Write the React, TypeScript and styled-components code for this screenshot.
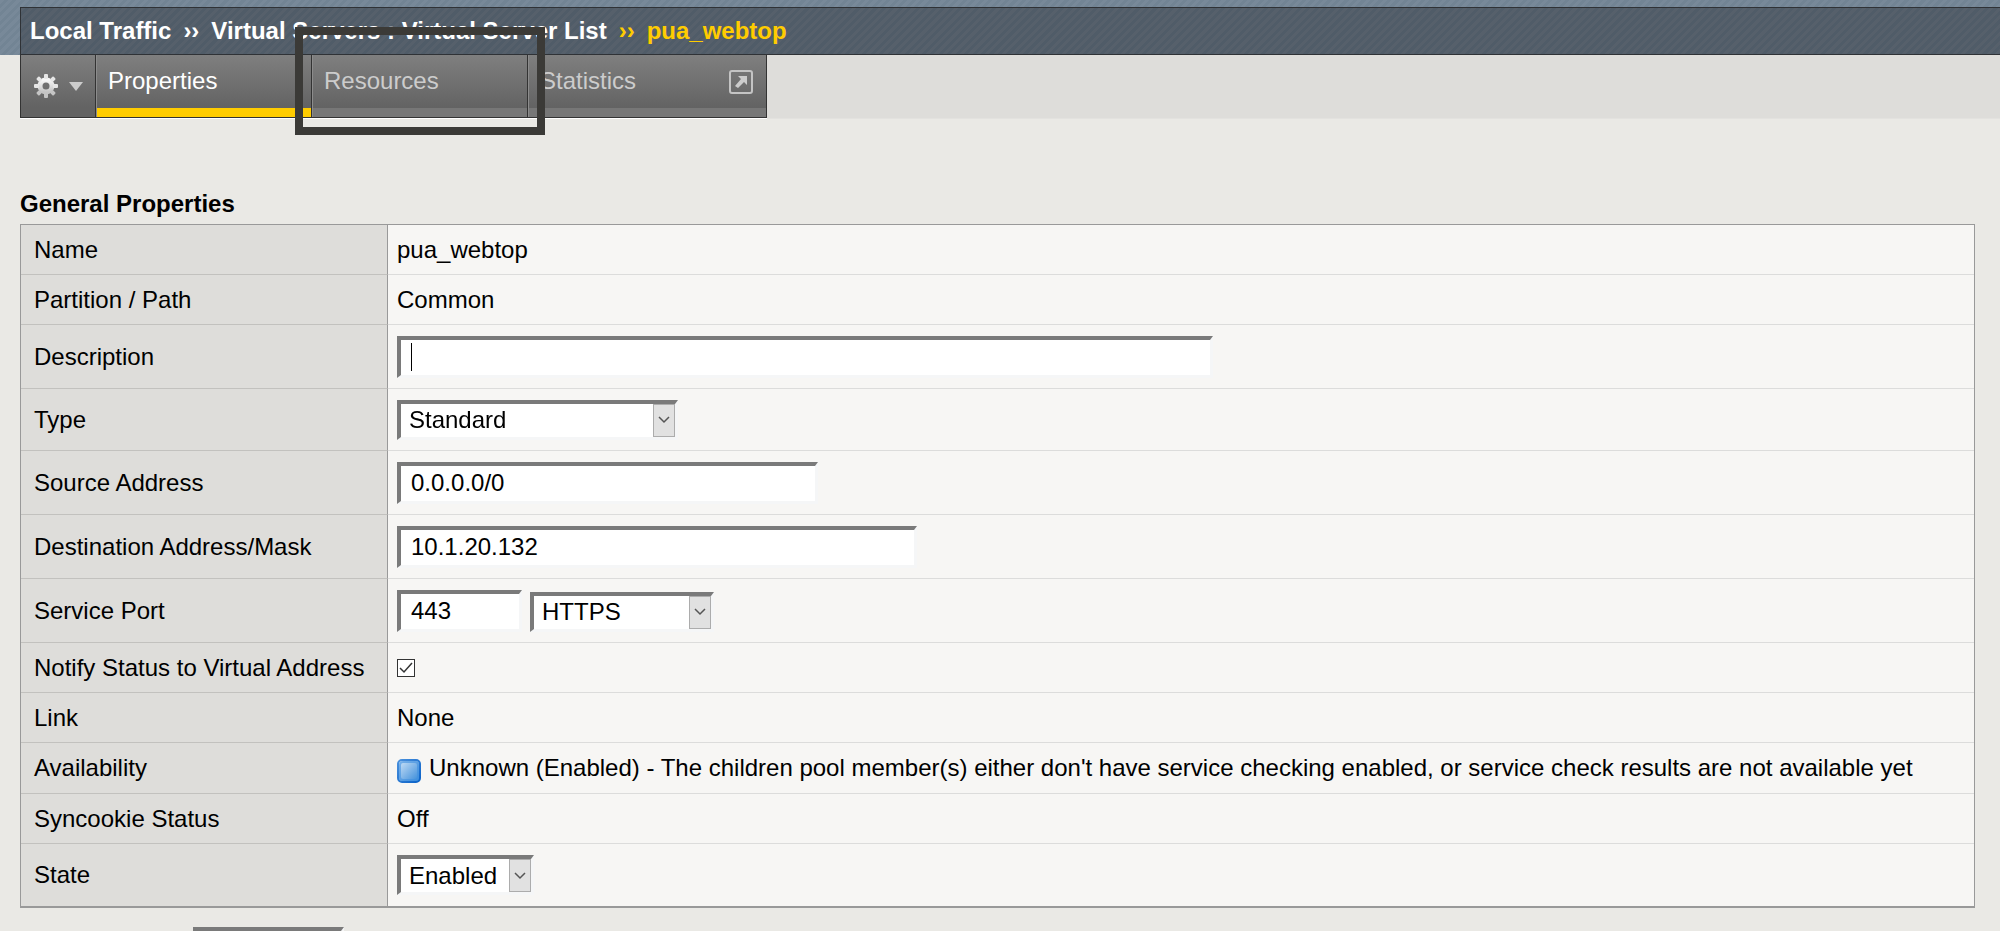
import React from 'react';
import styled, { createGlobalStyle, css } from 'styled-components';

const GlobalStyle = createGlobalStyle`
  *, *::before, *::after { box-sizing: border-box; }
  html { scrollbar-width: none; }
  body {
    margin: 0;
    background: #eae9e5;
    color: #000;
    font: 24px/28px "Liberation Sans", Arial, sans-serif;
  }
  input, select, button { font: inherit; color: inherit; margin: 0; border-radius: 0; }
`;

const Banner = styled.header`
  padding: 7px 0 0 20px;
  background: repeating-linear-gradient(135deg, #788999 0 3px, #728494 3px 6px);
`;

const Breadcrumb = styled.nav`
  display: flex;
  align-items: center;
  gap: 12px;
  height: 48px;
  padding-left: 9px;
  border: 1px solid #2f3236;
  border-right: 0;
  background: repeating-linear-gradient(135deg, #56606b 0 3px, #505c68 3px 6px);
  color: #fff;
  font-weight: bold;
  white-space: nowrap;
`;

const Crumb = styled.a`
  color: inherit;
  text-decoration: none;
`;

const Current = styled.span`
  color: #fc0;
`;

const TabStrip = styled.div`
  display: flex;
  height: 64px;
  margin-left: 20px;
  background: #dedddA;
  border-bottom: 1px solid #e3e2df;
`;

const Tabs = styled.nav`
  display: flex;
  border-left: 1px solid #333;
  border-bottom: 1px solid #333;
  box-shadow: 0 1px 0 #fff;
`;

const tabFace = css`
  border: 0;
  border-right: 1px solid #333;
  background: linear-gradient(#7f7f7f, #636363 85%);
`;

const GearButton = styled.button`
  ${tabFace}
  display: flex;
  align-items: center;
  gap: 10px;
  width: 75px;
  padding: 0 0 0 12px;
`;

const Tab = styled.a<{ $active?: boolean; $width: number }>`
  ${tabFace}
  position: relative;
  display: flex;
  justify-content: space-between;
  width: ${p => p.$width}px;
  padding: 12px 13px 0 11px;
  border-left: 1px solid #8c8c8c;
  color: ${p => (p.$active ? '#fff' : '#ccc')};
  text-decoration: none;

  &::after {
    content: '';
    position: absolute;
    inset: auto 0 0 0;
    height: 9px;
    background: ${p => (p.$active ? '#fc0' : '#777')};
  }
`;

const TabIcon = styled.svg`
  margin-top: 3px;
`;

const Highlight = styled.span`
  position: absolute;
  z-index: 2;
  inset: -28px -18px -18px -18px;
  border: 8px solid #3b3a37;
  pointer-events: none;
`;

const Main = styled.main`
  padding: 71px 25px 0 20px;
`;

const Heading = styled.h1`
  margin: 0 0 6px;
  font-size: 24px;
  line-height: 28px;
`;

const Properties = styled.table`
  width: 100%;
  border: 1px solid #999;
  border-bottom-width: 2px;
  border-spacing: 0;
`;

const Row = styled.tr<{ $height: number }>`
  height: ${p => p.$height}px;

  &:last-child > * { border-bottom: 0; }
`;

const Label = styled.th`
  width: 367px;
  padding: 0 0 0 13px;
  border-right: 1px solid #999;
  border-bottom: 1px solid #c2c1be;
  background: #dedddA;
  font-weight: normal;
  text-align: left;
`;

const Value = styled.td`
  padding: 0 0 0 9px;
  border-bottom: 1px solid #dcdcdb;
  background: #f7f6f4;
`;

const Fields = styled.div`
  display: flex;
  align-items: flex-end;
  gap: 8px;
`;

const sunken = css`
  border-style: solid;
  border-width: 4px 3px 3px 4px;
  border-color: #7a7a7a #f5f6f7 #f5f6f7 #7a7a7a;
  background-color: #fff;
  outline: none;
`;

const TextBox = styled.input<{ $width: number }>`
  ${sunken}
  display: block;
  width: ${p => p.$width}px;
  height: 42px;
  padding: 0 10px;
`;

const CaretFrame = styled.div`
  position: relative;

  input { caret-color: transparent; }

  &:focus-within input:placeholder-shown + span { display: block; }
`;

const Caret = styled.span`
  position: absolute;
  top: 7px;
  left: 14px;
  display: none;
  width: 1px;
  height: 28px;
  background: #000;
  pointer-events: none;
`;

const SelectFrame = styled.div<{ $width: number }>`
  position: relative;
  width: ${p => p.$width}px;
`;

const SelectBox = styled.select`
  ${sunken}
  display: block;
  appearance: none;
  width: 100%;
  height: 40px;
  padding: 0 24px 0 8px;
`;

const SelectArrow = styled.span`
  position: absolute;
  inset: 4px 3px 3px auto;
  display: grid;
  place-items: center;
  width: 22px;
  border: 1px solid #acacac;
  background: #e1e1e1;
  pointer-events: none;
`;

const CheckFrame = styled.div`
  position: relative;
  width: 18px;
  height: 18px;
`;

const CheckBox = styled.input`
  display: block;
  appearance: none;
  width: 18px;
  height: 18px;
  border: 1px solid #333;
  background: #fff;
`;

const CheckMark = styled.svg`
  position: absolute;
  inset: 0;
  pointer-events: none;
`;

const Status = styled.div`
  display: flex;
  align-items: center;
  gap: 8px;
`;

const StatusIcon = styled.svg`
  flex: none;
  margin-top: 5px;
`;

const ConfigBar = styled.div`
  padding: 19px 0 0 173px;
`;

function Select({ id, label, value, width }: { id: string; label?: string; value?: string; width: number }) {
  return (
    <SelectFrame $width={width}>
      <SelectBox id={id} aria-label={label}>
        {value && <option>{value}</option>}
      </SelectBox>
      <SelectArrow>
        <svg width="12" height="8" viewBox="0 0 12 8" fill="none" stroke="#555" strokeWidth="1.5">
          <path d="M1 1l5 5 5-5" />
        </svg>
      </SelectArrow>
    </SelectFrame>
  );
}

function GearIcon() {
  const teeth = [0, 45, 90, 135, 180, 225, 270, 315];
  return (
    <svg width="26" height="26" viewBox="0 0 26 26">
      <defs>
        <linearGradient id="gear" x1="0" y1="0" x2="0" y2="1">
          <stop offset="0" stopColor="#f6f6f6" />
          <stop offset="1" stopColor="#c4c4c4" />
        </linearGradient>
      </defs>
      <circle cx="13" cy="13" r="6" fill="none" stroke="url(#gear)" strokeWidth="5" />
      {teeth.map(a => (
        <rect key={a} x="11" y="1" width="4" height="5" rx="1" fill={a > 90 && a < 270 ? '#c4c4c4' : '#e6e6e6'} transform={`rotate(${a} 13 13)`} />
      ))}
    </svg>
  );
}

export default function App() {
  return (
    <>
      <GlobalStyle />
      <Banner>
        <Breadcrumb>
          <Crumb href="#traffic">Local Traffic</Crumb>
          <span>››</span>
          <Crumb href="#servers">Virtual Servers : Virtual Server List</Crumb>
          <Current>››</Current>
          <Current>pua_webtop</Current>
        </Breadcrumb>
      </Banner>
      <TabStrip>
        <Tabs>
          <GearButton aria-label="Options">
            <GearIcon />
            <svg width="14" height="9" viewBox="0 0 14 9">
              <path d="M0 0h14L7 9z" fill="#ccc" />
            </svg>
          </GearButton>
          <Tab href="#properties" $active $width={216}>Properties</Tab>
          <Tab href="#resources" $width={216}>
            Resources
            <Highlight />
          </Tab>
          <Tab href="#statistics" $width={239}>
            Statistics
            <TabIcon width="24" height="24" viewBox="0 0 24 24">
              <rect x="1" y="1" width="22" height="22" rx="2" fill="none" stroke="#c4c4c4" strokeWidth="2" />
              <path d="M9 6h9v9l-3-3-6 6-3-2 6-7z" fill="#ccc" />
            </TabIcon>
          </Tab>
        </Tabs>
      </TabStrip>
      <Main>
        <Heading>General Properties</Heading>
        <Properties>
          <tbody>
            <Row $height={50}>
              <Label scope="row">Name</Label>
              <Value>pua_webtop</Value>
            </Row>
            <Row $height={50}>
              <Label scope="row">Partition / Path</Label>
              <Value>Common</Value>
            </Row>
            <Row $height={64}>
              <Label scope="row"><label htmlFor="description">Description</label></Label>
              <Value>
                <CaretFrame>
                  <TextBox id="description" $width={816} placeholder=" " autoFocus />
                  <Caret />
                </CaretFrame>
              </Value>
            </Row>
            <Row $height={62}>
              <Label scope="row"><label htmlFor="type">Type</label></Label>
              <Value><Select id="type" value="Standard" width={281} /></Value>
            </Row>
            <Row $height={64}>
              <Label scope="row"><label htmlFor="source">Source Address</label></Label>
              <Value><TextBox id="source" $width={421} defaultValue="0.0.0.0/0" /></Value>
            </Row>
            <Row $height={64}>
              <Label scope="row"><label htmlFor="destination">Destination Address/Mask</label></Label>
              <Value><TextBox id="destination" $width={520} defaultValue="10.1.20.132" /></Value>
            </Row>
            <Row $height={64}>
              <Label scope="row"><label htmlFor="port">Service Port</label></Label>
              <Value>
                <Fields>
                  <TextBox id="port" $width={125} defaultValue="443" />
                  <Select id="service" label="Service" value="HTTPS" width={184} />
                </Fields>
              </Value>
            </Row>
            <Row $height={50}>
              <Label scope="row"><label htmlFor="notify">Notify Status to Virtual Address</label></Label>
              <Value>
                <CheckFrame>
                  <CheckBox id="notify" type="checkbox" defaultChecked />
                  <CheckMark width="18" height="18" viewBox="0 0 18 18" fill="none" stroke="#333" strokeWidth="1.5">
                    <path d="M3 9l4 4 8-9" />
                  </CheckMark>
                </CheckFrame>
              </Value>
            </Row>
            <Row $height={50}>
              <Label scope="row">Link</Label>
              <Value>None</Value>
            </Row>
            <Row $height={51}>
              <Label scope="row">Availability</Label>
              <Value>
                <Status>
                  <StatusIcon width="24" height="24" viewBox="0 0 24 24">
                    <defs>
                      <linearGradient id="status" x1="0" y1="0" x2="1" y2="1">
                        <stop offset="0" stopColor="#d4e6f8" />
                        <stop offset="1" stopColor="#2f86d8" />
                      </linearGradient>
                      <linearGradient id="statusEdge" x1="0" y1="0" x2="1" y2="1">
                        <stop offset="0" stopColor="#4a90dc" />
                        <stop offset="1" stopColor="#0a62c8" />
                      </linearGradient>
                    </defs>
                    <rect x="1" y="1" width="22" height="22" rx="4" fill="url(#status)" stroke="url(#statusEdge)" strokeWidth="2" />
                    <rect x="3" y="3" width="18" height="18" rx="3" fill="none" stroke="#3f8fe0" strokeOpacity="0.6" strokeWidth="2" />
                  </StatusIcon>
                  Unknown (Enabled) - The children pool member(s) either don't have service checking enabled, or service check results are not available yet
                </Status>
              </Value>
            </Row>
            <Row $height={50}>
              <Label scope="row">Syncookie Status</Label>
              <Value>Off</Value>
            </Row>
            <Row $height={62}>
              <Label scope="row"><label htmlFor="state">State</label></Label>
              <Value><Select id="state" value="Enabled" width={137} /></Value>
            </Row>
          </tbody>
        </Properties>
        <ConfigBar>
          <Select id="configuration" label="Configuration" width={151} />
        </ConfigBar>
      </Main>
    </>
  );
}
